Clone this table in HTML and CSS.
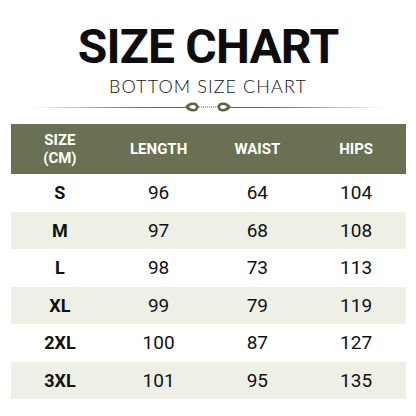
FILE: index.html
```html
<!DOCTYPE html>
<html>
<head>
<meta charset="utf-8">
<link rel="stylesheet" href="styles.css">
</head>
<body>
<div class="page">
  <h1 class="title">SIZE CHART</h1>
  <div class="subtitle">BOTTOM SIZE CHART</div>
  <div class="divider">
    <span class="line left"></span>
    <svg class="orn" width="48" height="14" viewBox="0 0 48 14">
      <path d="M1 7 C4 2 10 1.5 13 3.5 L15 7 L13 10.5 C10 12.5 4 12 1 7 Z" fill="#5d6347"/>
      <path d="M5 7 C7 4.8 10 4.6 11.5 5.8 L12 7 L11.5 8.2 C10 9.4 7 9.2 5 7 Z" fill="#fff"/>
      <path d="M47 7 C44 2 38 1.5 35 3.5 L33 7 L35 10.5 C38 12.5 44 12 47 7 Z" fill="#5d6347"/>
      <path d="M43 7 C41 4.8 38 4.6 36.5 5.8 L36 7 L36.5 8.2 C38 9.4 41 9.2 43 7 Z" fill="#fff"/>
      <line x1="15" y1="7" x2="33" y2="7" stroke="#5d6347" stroke-width="1" stroke-dasharray="1 1"/>
    </svg>
    <span class="line right"></span>
  </div>
  <div class="table">
    <div class="row head">
      <div class="cell">SIZE<br>(CM)</div>
      <div class="cell">LENGTH</div>
      <div class="cell">WAIST</div>
      <div class="cell">HIPS</div>
    </div>
    <div class="row">
      <div class="cell size">S</div><div class="cell">96</div><div class="cell">64</div><div class="cell">104</div>
    </div>
    <div class="row tint">
      <div class="cell size">M</div><div class="cell">97</div><div class="cell">68</div><div class="cell">108</div>
    </div>
    <div class="row">
      <div class="cell size">L</div><div class="cell">98</div><div class="cell">73</div><div class="cell">113</div>
    </div>
    <div class="row tint">
      <div class="cell size">XL</div><div class="cell">99</div><div class="cell">79</div><div class="cell">119</div>
    </div>
    <div class="row">
      <div class="cell size">2XL</div><div class="cell">100</div><div class="cell">87</div><div class="cell">127</div>
    </div>
    <div class="row tint">
      <div class="cell size">3XL</div><div class="cell">101</div><div class="cell">95</div><div class="cell">135</div>
    </div>
  </div>
</div>
</body>
</html>
```

FILE: styles.css
```css
* { box-sizing: border-box; margin: 0; padding: 0; }
html, body { width: 416px; height: 416px; background: #fff; overflow: hidden; }
body { font-family: Roboto, "Liberation Sans", sans-serif; color: #111; }
.page { display: flex; flex-direction: column; align-items: center; padding-top: 22px; }
.title {
  font-family: Roboto, sans-serif;
  font-weight: 700;
  font-size: 48px;
  line-height: 50px;
  letter-spacing: -0.8px;
  color: #0d0d0d;
}
.subtitle {
  margin-top: 4px;
  font-family: Lato, "Open Sans", sans-serif;
  font-weight: 300;
  font-size: 18px;
  line-height: 20px;
  letter-spacing: 1.1px;
  color: #111;
}
.divider {
  margin-top: 4px;
  width: 352px;
  height: 14px;
  display: flex;
  align-items: center;
}
.line { flex: 1; height: 1px; }
.line.left { background: linear-gradient(to right, rgba(120,125,100,0), #7c8166 60%, #5d6347); }
.line.right { background: linear-gradient(to left, rgba(120,125,100,0), #7c8166 60%, #5d6347); }
.orn { display: block; margin: 0 -1px; }
.table { margin-top: 10px; width: 395px; display: flex; flex-direction: column; }
.row {
  display: grid;
  grid-template-columns: repeat(4, 1fr);
  height: 37.5px;
  align-items: center;
}
.row.head { height: 50px; background: #6a7052; color: #fff; }
.row.tint { background: #eef0e6; }
.cell { text-align: center; font-size: 19px; color: #111; }
.head .cell { font-size: 15px; font-weight: 700; color: #fff; line-height: 18px; }
.cell.size { font-weight: 700; font-size: 18px; }
```
